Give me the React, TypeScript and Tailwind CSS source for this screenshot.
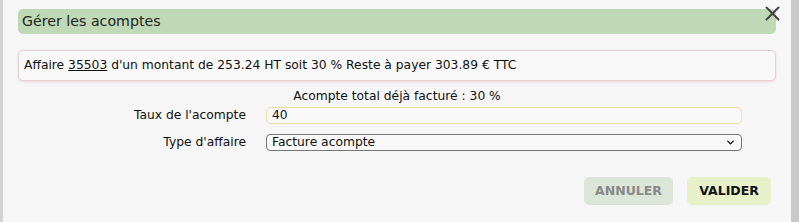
import { ChevronDown } from 'lucide-react';

const font = { fontFamily: '"DejaVu Sans", Verdana, sans-serif' };

export default function App() {
  return (
    <div className="flex h-[222px] w-[799px] overflow-hidden bg-[#c9c9c9]" style={font}>
      <div className="w-[3px] shrink-0 bg-[#d4d4d4]" />
      <div className="relative flex w-[788px] shrink-0 flex-col bg-[#f6f6f6] px-[15px] pt-[9px]">
        <button className="absolute right-[11px] top-[6px]">
          <svg width="15" height="15" viewBox="0 0 15 15" stroke="#444" strokeWidth="2" strokeLinecap="round">
            <path d="M1.5 1.5 L13.5 13.5 M13.5 1.5 L1.5 13.5" />
          </svg>
        </button>
        <div className="flex h-[25px] w-[758px] items-center rounded-[5px] bg-[#bfd9b6] px-[4px] text-[14.2px] leading-none text-[#222]">
          Gérer les acomptes
        </div>
        <div className="mt-[16px] flex h-[31px] w-[758px] items-center rounded-[5px] border border-[#e8cfcf] bg-[#f8f8f8] px-[5px] text-[12.3px] leading-none text-[#111] shadow-[0_1px_2px_rgba(200,150,150,0.3)]">
          Affaire&nbsp;<span className="underline">35503</span>&nbsp;d'un montant de 253.24 HT soit 30 % Reste à payer 303.89 € TTC
        </div>
        <div className="mt-[8px] h-[15px] w-[758px] text-center text-[12.3px] leading-[15px] text-[#111]">
          Acompte total déjà facturé : 30 %
        </div>
        <div className="mt-[3px] flex h-[17px] items-center">
          <label className="w-[228px] text-right text-[12.3px] leading-none text-[#111]">Taux de l'acompte</label>
          <div className="ml-[20px] flex h-[17px] w-[476px] items-center rounded-[5px] border border-[#f0dfa3] bg-[#f8f8f8] px-[5px] text-[12.3px] leading-none text-[#111]">
            40
          </div>
        </div>
        <div className="mt-[10px] flex h-[17px] items-center">
          <label className="w-[228px] text-right text-[12.3px] leading-none text-[#111]">Type d'affaire</label>
          <div className="ml-[20px] flex h-[17px] w-[476px] items-center justify-between rounded-[4px] border border-[#767676] bg-[#f8f8f8] px-[5px] text-[12.3px] leading-none text-[#111]">
            <span>Facture acompte</span>
            <ChevronDown className="h-[11px] w-[11px]" strokeWidth={3} />
          </div>
        </div>
        <div className="mt-[26px] flex w-[758px] justify-end gap-[14px] pr-[5px]">
          <button className="h-[28px] w-[89px] rounded-[5px] bg-[#dbe6d8] text-[12.5px] font-bold text-[#888]">
            ANNULER
          </button>
          <button className="h-[28px] w-[84px] rounded-[5px] bg-[#e7f0c8] text-[12.5px] font-bold text-[#111]">
            VALIDER
          </button>
        </div>
      </div>
      <div className="flex-1 bg-[#c9c9c9]" />
    </div>
  );
}
